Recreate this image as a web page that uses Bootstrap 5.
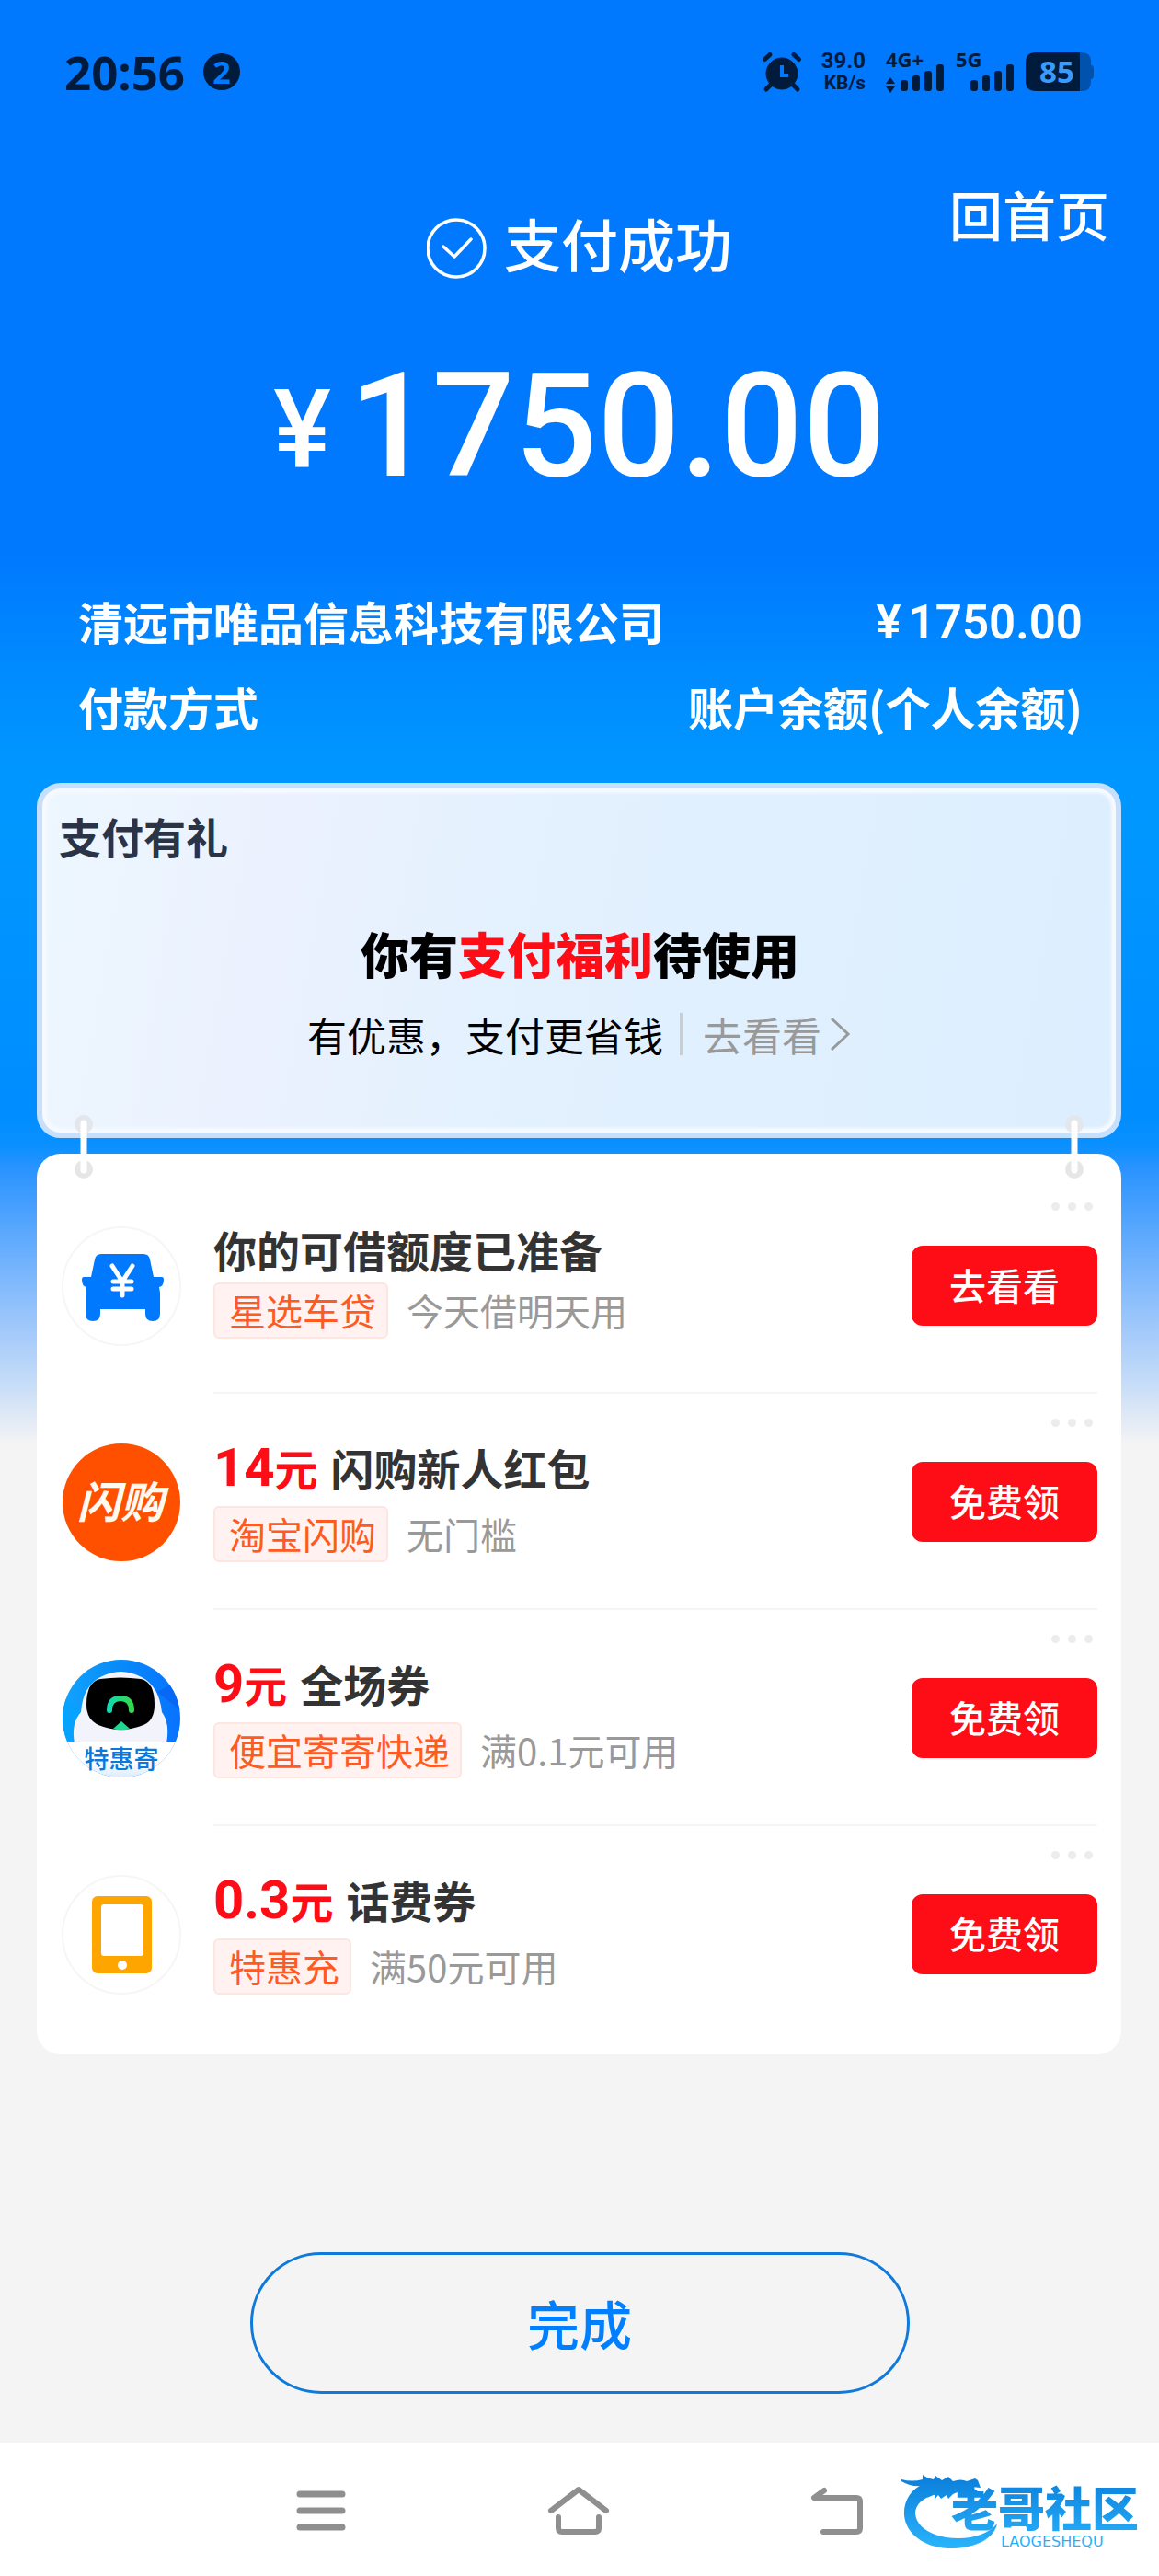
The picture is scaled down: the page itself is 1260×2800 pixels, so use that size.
<!DOCTYPE html>
<html lang="zh-CN">
<head>
<meta charset="utf-8">
<meta name="viewport" content="width=device-width, initial-scale=1">
<title>支付成功</title>
<link rel="stylesheet" href="https://cdn.jsdelivr.net/npm/bootstrap@5.3.0/dist/css/bootstrap.min.css">
<style>
body{font-family:"Noto Sans CJK SC","Noto Sans",sans-serif;background:#f4f4f4}
.screen{min-height:100vh;background:linear-gradient(180deg,#0079ff 0,#0079ff 600px,#008aff 720px,#0096ff 830px,#0097ff 900px,#008dff 1210px,#0a90ff 1245px,#2a93ff 1270px,#8bbefc 1410px,#c4dbf8 1500px,#f4f4f4 1570px) no-repeat}
.status{padding:57px 70px 0 70px;height:99px;color:#001b3c;font-family:"Noto Sans","Noto Sans CJK SC",sans-serif;font-weight:700}
.clock{font-size:51px;line-height:42px}
.count{width:40px;height:40px;margin-left:20px;background:#001b3c;color:#0079ff;font-size:34px;line-height:40px}
.indicators{gap:10px}
.indicators svg{overflow:visible}
.rate{font:700 24px/24px Roboto,sans-serif;margin:-3px 12px 0 12px}
.rate small{font-size:21px;line-height:24px}
.topline{display:grid;grid-template-columns:1fr auto 1fr;padding:0 54px;margin-top:106px}
.home-link{font-size:58px;line-height:54px;font-weight:500}
.done-title{font-size:62px;line-height:60px;font-weight:500;margin-top:29px}
.done-title span{padding-bottom:10px}
.total{font:500 158px/160px Roboto,sans-serif;margin-top:79px}
.total .cur{font-size:118px;line-height:118px;padding-top:8px;margin-right:20px}
.details{margin:85px 83px 0 85px;font-size:49px;line-height:93px;font-weight:700}
.sum{font-family:Roboto,sans-serif;font-weight:600;font-size:51px;line-height:98px;height:93px}
.sheet{margin:0 41px 0 40px}
.gift{margin-top:37px;min-height:386px;border:6px solid #c5dffc;border-radius:26px;box-shadow:inset 0 0 3px 5px #f6faff;background:linear-gradient(100deg,#edf7ff 0,#ebf1fe 24%,#e3f1fe 46%,#dceeff 100%);padding:26px 16px 26px 18px}
.gift h2{font-size:46px;line-height:50px;font-weight:700;color:#2b3347;margin:0}
.gift h3{font-size:53px;line-height:60px;font-weight:900;color:#000;margin:73px 0 28px}
.hot{color:#ff0d17}
.gift p{font-size:43px;line-height:60px;color:#000}
.gift a{color:#999}
.rule{width:3px;height:46px;background:#ccc;margin:0 22px 0 18px}
.offers{margin-top:17px;background:#fff;border-radius:26px;padding:26px 26px 13px 27px}
.pin{position:absolute;top:-46px}
.pin-l{left:40px}.pin-r{right:40px}
.offer{height:235px;gap:35px}
.logo{width:130px;height:130px;flex:none}
.body-col{border-bottom:2px solid #f5f5f5}
.offer:last-child .body-col{border-color:transparent}
.info{padding-top:48px}
.info h4{font-size:47px;line-height:60px;font-weight:700;color:#333;margin:0 0 6px}
.priced .info{padding-top:50px}
.priced h4{margin-bottom:12px}
.price{color:#ff0d17;margin-right:14px}
.price b{font:700 58px/60px Roboto,sans-serif}
.tag{font-size:40px;line-height:57px;padding:0 11px 0 15px;border:2px solid #fde6e0;border-radius:6px;background:#fff2f0;color:#ff5a22;margin-right:20px}
.note{font-size:40px;line-height:61px;color:#999}
.more{border:0;background:none;padding:0 5px 0 0;margin:27px 0 38px;line-height:0}
.claim{width:202px;height:87px;border:0;border-radius:12px;background:#ff0d17!important;color:#fff!important;font-size:40px;line-height:40px;font-weight:500;padding:0 0 3px}
.finish{width:717px;max-width:90%;height:154px;margin:215px auto 53px;border:3px solid #1079dc;border-radius:77px;color:#0080ff;font-size:57px;font-weight:500}
.sysnav{height:147px;background:#fff}
.keys{gap:218px}
.sysnav button{border:0;background:none;padding:0;position:relative}
.watermark{position:absolute;right:14px;top:23px}
svg{display:block}
</style>
<script src="https://cdn.jsdelivr.net/npm/bootstrap@5.3.0/dist/js/bootstrap.bundle.min.js"></script>
</head>
<body>
<div class="screen d-flex flex-column">
  <header class="status d-flex justify-content-between">
    <div class="d-flex align-items-center">
      <span class="clock">20:56</span>
      <span class="count rounded-circle text-center">2</span>
    </div>
    <div class="indicators d-flex">
      <svg width="42" height="42" viewBox="0 0 42 42" fill="#001b3c" stroke="#001b3c" stroke-linecap="round"><circle cx="21" cy="23" r="17"/><path d="M2.500 7.500L8 2.500M39.500 7.500L34 2.500M9 35l-5 5M33 35l5 5" stroke-width="5"/><path d="M21 14v11h7" fill="none" stroke="#0079ff" stroke-width="4" stroke-linecap="butt"/></svg>
      <span class="rate d-flex flex-column align-items-end">39.0<small class="fw-bold">KB/s</small></span>
      <svg width="66" height="44" viewBox="0 0 66 44" fill="#001b3c"><text x="0" y="16" font-size="22">4G+</text><path d="M0 34l5-7 5 7zM0 37l5 7 5-7z"/><rect x="16" y="30" width="8" height="12" rx="3"/><rect x="29" y="25" width="8" height="17" rx="3"/><rect x="42" y="20" width="8" height="22" rx="3"/><rect x="55" y="13" width="8" height="29" rx="3"/></svg>
      <svg width="66" height="44" viewBox="0 0 66 44" fill="#001b3c"><text x="0" y="16" font-size="22">5G</text><rect x="16" y="30" width="8" height="12" rx="3"/><rect x="29" y="25" width="8" height="17" rx="3"/><rect x="42" y="20" width="8" height="22" rx="3"/><rect x="55" y="13" width="8" height="29" rx="3"/></svg>
      <svg width="75" height="42" viewBox="0 0 75 42"><path d="M58 0h3q10 0 10 10v4q3 0 3 4v7q0 4-3 4v3q0 10-10 10h-3z" fill="#0052ad"/><path d="M11 0h48v42H11Q0 42 0 31V11Q0 0 11 0z" fill="#001b3c"/><text x="15" y="33" font-size="33" fill="#3a9bff">85</text></svg>
    </div>
  </header>

  <main class="flex-grow-1 d-flex flex-column">
    <div class="topline text-white">
      <span></span>
      <div class="done-title d-flex align-items-center">
        <svg class="me-3" width="68" height="68" viewBox="0 0 68 68" fill="none" stroke="#fff" stroke-width="3.500"><circle cx="32" cy="35" r="31"/><path d="M18 33l12 11 18-19" stroke-linecap="round" stroke-linejoin="round"/></svg>
        <span>支付成功</span>
      </div>
      <a href="#" class="home-link text-white text-decoration-none text-end">回首页</a>
    </div>
    <div class="total text-white d-flex justify-content-center align-items-center"><span class="cur">¥</span><span>1750.00</span></div>

    <section class="details text-white">
      <div class="d-flex justify-content-between"><span>清远市唯品信息科技有限公司</span><span class="sum"><span class="me-2">¥</span>1750.00</span></div>
      <div class="d-flex justify-content-between"><span>付款方式</span><span>账户余额(个人余额)</span></div>
    </section>

    <section class="sheet gift">
      <h2>支付有礼</h2>
      <h3 class="text-center">你有<span class="hot">支付福利</span>待使用</h3>
      <p class="d-flex justify-content-center align-items-center m-0">有优惠，支付更省钱<span class="rule"></span><a href="#" class="d-flex align-items-center text-decoration-none">去看看<svg class="ms-2" width="26" height="40" viewBox="0 0 26 40" fill="none" stroke="#999" stroke-width="3"><path d="M3 3l18 17L3 37"/></svg></a></p>
    </section>

    <section class="sheet offers position-relative">
      <svg class="pin pin-l" width="22" height="76" viewBox="0 0 22 76"><circle cx="11" cy="14" r="10" fill="#e3e6ea"/><circle cx="11" cy="63" r="10" fill="#e6e6e6"/><path d="M11 13v51" stroke="#fff" stroke-width="7" stroke-linecap="round"/></svg>
      <svg class="pin pin-r" width="22" height="76" viewBox="0 0 22 76"><circle cx="11" cy="14" r="10" fill="#e3e6ea"/><circle cx="11" cy="63" r="10" fill="#e6e6e6"/><path d="M11 13v51" stroke="#fff" stroke-width="7" stroke-linecap="round"/></svg>

      <article class="offer d-flex align-items-center">
        <svg class="logo" viewBox="0 0 130 130"><circle cx="65" cy="65" r="64" fill="#fff" stroke="#f6f6f6" stroke-width="2"/><path d="M43 30h46q6 0 7 6l4 19h9q2 0 2 3 0 7-5 8l1 6v23q0 8-8 8t-8-8v-5H42v5q0 8-8 8t-8-8V72l1-6q-5-1-5-8 0-3 2-3h8l4-19q1-6 7-6z" fill="#0079ff"/><path d="M55 43l11 17 11-17M66 60v15M56 60h20M56 68h20" fill="none" stroke="#fff" stroke-width="5" stroke-linecap="round"/></svg>
        <div class="body-col d-flex justify-content-between flex-grow-1 h-100">
          <div class="info"><h4>你的可借额度已准备</h4><div class="d-flex"><span class="tag">星选车贷</span><span class="note">今天借明天用</span></div></div>
          <div class="d-flex flex-column align-items-end"><button class="more" type="button" aria-label="更多"><svg width="45" height="9" viewBox="0 0 45 9" fill="#ececec"><circle cx="4.500" cy="4.500" r="4.500"/><circle cx="22.500" cy="4.500" r="4.500"/><circle cx="40.500" cy="4.500" r="4.500"/></svg></button><button class="btn claim" type="button">去看看</button></div>
        </div>
      </article>

      <article class="offer priced d-flex align-items-center">
        <svg class="logo" viewBox="0 0 130 130"><circle cx="65" cy="65" r="64" fill="#ff5000"/><text x="64" y="82" font-size="47" font-weight="700" font-style="italic" fill="#fffaf0" text-anchor="middle">闪购</text></svg>
        <div class="body-col d-flex justify-content-between flex-grow-1 h-100">
          <div class="info"><h4><span class="price"><b>14</b>元</span>闪购新人红包</h4><div class="d-flex"><span class="tag">淘宝闪购</span><span class="note">无门槛</span></div></div>
          <div class="d-flex flex-column align-items-end"><button class="more" type="button" aria-label="更多"><svg width="45" height="9" viewBox="0 0 45 9" fill="#ececec"><circle cx="4.500" cy="4.500" r="4.500"/><circle cx="22.500" cy="4.500" r="4.500"/><circle cx="40.500" cy="4.500" r="4.500"/></svg></button><button class="btn claim" type="button">免费领</button></div>
        </div>
      </article>

      <article class="offer priced d-flex align-items-center">
        <svg class="logo" viewBox="0 0 130 130">
          <defs><clipPath id="disc"><circle cx="65" cy="65" r="64"/></clipPath><linearGradient id="sky" x1="0" x2="1"><stop stop-color="#12a4ff"/><stop offset=".45" stop-color="#088cf8"/><stop offset="1" stop-color="#0872ff"/></linearGradient><linearGradient id="smile" x1="0" x2="1"><stop stop-color="#11d8b0"/><stop offset="1" stop-color="#35d84a"/></linearGradient><linearGradient id="foot" x1="0" x2="0" y1="0" y2="1"><stop offset=".5" stop-color="#fff"/><stop offset="1" stop-color="#dceafc"/></linearGradient></defs>
          <g clip-path="url(#disc)"><path fill="url(#sky)" d="M0 0h130v130H0z"/><path d="M104 36l30 24V20z" fill="#0668f5"/><path d="M0 40l22 18-14 34H0z" fill="#05a2ff"/><path d="M14 92q-4-22 7-34 2-28 21-38 22-12 45 0 19 10 22 38 9 12 5 34z" fill="#f3f3fb"/><path d="M42 22q22-3 44 0 15 3 15 28 0 17-12 22-25 10-49 0-13-6-13-22 0-25 15-28z" fill="#000"/><path d="M52 56q0-13 12-13t12 13" fill="none" stroke="url(#smile)" stroke-width="6" stroke-linecap="round"/><path d="M65 68l9 8q-9 3-18 0z" fill="#20d890"/><path d="M0 90h130v40H0z" fill="url(#foot)"/></g>
          <text x="65" y="119" font-size="27" font-weight="500" fill="#0a79dc" text-anchor="middle">特惠寄</text></svg>
        <div class="body-col d-flex justify-content-between flex-grow-1 h-100">
          <div class="info"><h4><span class="price"><b>9</b>元</span>全场券</h4><div class="d-flex"><span class="tag">便宜寄寄快递</span><span class="note">满0.1元可用</span></div></div>
          <div class="d-flex flex-column align-items-end"><button class="more" type="button" aria-label="更多"><svg width="45" height="9" viewBox="0 0 45 9" fill="#ececec"><circle cx="4.500" cy="4.500" r="4.500"/><circle cx="22.500" cy="4.500" r="4.500"/><circle cx="40.500" cy="4.500" r="4.500"/></svg></button><button class="btn claim" type="button">免费领</button></div>
        </div>
      </article>

      <article class="offer priced d-flex align-items-center">
        <svg class="logo" viewBox="0 0 130 130"><circle cx="65" cy="65" r="64" fill="#fff" stroke="#f6f6f6" stroke-width="2"/><rect x="33" y="23" width="65" height="84" rx="6" fill="#ffa500"/><rect x="43" y="32" width="46" height="56" rx="3" fill="#fff"/><circle cx="66" cy="98" r="5" fill="#fff"/></svg>
        <div class="body-col d-flex justify-content-between flex-grow-1 h-100">
          <div class="info"><h4><span class="price"><b>0.3</b>元</span>话费券</h4><div class="d-flex"><span class="tag">特惠充</span><span class="note">满50元可用</span></div></div>
          <div class="d-flex flex-column align-items-end"><button class="more" type="button" aria-label="更多"><svg width="45" height="9" viewBox="0 0 45 9" fill="#ececec"><circle cx="4.500" cy="4.500" r="4.500"/><circle cx="22.500" cy="4.500" r="4.500"/><circle cx="40.500" cy="4.500" r="4.500"/></svg></button><button class="btn claim" type="button">免费领</button></div>
        </div>
      </article>
    </section>

    <button class="btn finish" type="button">完成</button>
  </main>

  <nav class="sysnav position-relative d-flex justify-content-center align-items-center">
    <div class="keys d-flex align-items-center">
      <button type="button" aria-label="最近任务"><svg width="56" height="54" viewBox="0 0 56 54" stroke="#8f8f8f" stroke-width="7" stroke-linecap="round"><path d="M5 9h46M5 27h46M5 45h46"/></svg></button>
      <button type="button" aria-label="主屏幕"><svg width="68" height="54" viewBox="0 0 68 54" fill="none" stroke="#8f8f8f" stroke-width="6" stroke-linecap="round" stroke-linejoin="round"><path d="M4 27L34 4l30 23M12 34v12q0 4 4 4h36q4 0 4-4V34"/></svg></button>
      <button type="button" aria-label="返回"><svg width="58" height="54" viewBox="0 0 58 54" fill="none" stroke="#8f8f8f" stroke-width="6" stroke-linecap="round" stroke-linejoin="round"><path d="M15 5L4 13h46q4 0 4 4v29q0 4-4 4H14"/></svg></button>
    </div>
    <svg class="watermark" width="270" height="100" viewBox="0 0 270 100">
      <defs><linearGradient id="sea" gradientUnits="userSpaceOnUse" x1="0" x2="0" y1="14" y2="92"><stop stop-color="#0b7fdc"/><stop offset="1" stop-color="#2ab4fb"/></linearGradient></defs>
      <g fill="url(#sea)"><path d="M30 21C14 27 6 41 7 56c2 22 25 37 54 36 25-1 44-11 47-27-8 10-24 16-42 16-26 0-46-11-47-27 0-10 10-19 25-21l4-6z"/><path d="M4 17q12 3 23 0l0-5q5 4 12 5l2-4 7 5 7-4 5 5q9-3 15 0l9-3 3 2 3 8-10-1 7 5-5 3-9-3-6 0-7 3-5 5-2-4-6 4-3-4-4 5 0-6-8 4 4-7-9-1 5-6q-15 4-28-4z"/>
      <text x="58" y="68" font-size="51" font-weight="900">老哥社区</text><text x="112" y="90" font-size="16" font-family="DejaVu Sans, sans-serif">LAOGESHEQU</text></g>
    </svg>
  </nav>
</div>
</body>
</html>
